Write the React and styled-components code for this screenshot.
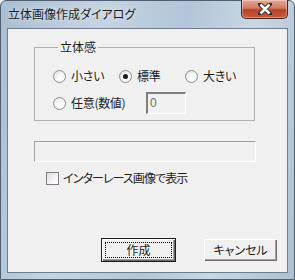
import React from 'react'
import styled, { createGlobalStyle } from 'styled-components'

const Global = createGlobalStyle`
  html, body {
    margin: 0;
    padding: 0;
    background: #ffffff;
  }
  * {
    box-sizing: border-box;
  }
`

const Window = styled.div`
  width: 295px;
  height: 280px;
  display: flex;
  flex-direction: column;
  border: 1px solid #4f5f70;
  border-radius: 6px 6px 0 0;
  background: linear-gradient(100deg, #a9bdd1 0%, #c4d3e2 30%, #b3c5d8 55%, #c9d6e3 75%, #aebfd1 100%);
  font-family: "Noto Sans CJK JP", sans-serif;
  font-size: 12px;
  font-feature-settings: "palt";
  color: #1c1c1c;
`

const TitleBar = styled.div`
  height: 27px;
  display: flex;
  justify-content: space-between;
  align-items: flex-start;
  padding-left: 7px;
`

const Title = styled.div`
  margin-top: 5px;
  line-height: 16px;
  font-size: 12px;
  text-shadow: 0 0 6px rgba(255, 255, 255, 0.9);
`

const CloseButton = styled.div`
  width: 47px;
  height: 19px;
  margin-top: -1px;
  margin-right: 6px;
  display: flex;
  align-items: center;
  justify-content: center;
  border: 1px solid #4d2320;
  border-top: none;
  border-radius: 0 0 5px 5px;
  background: linear-gradient(#e3a896 0%, #d27a62 45%, #b8432a 55%, #c65a3a 100%);
  box-shadow: inset 0 0 0 1px rgba(255, 255, 255, 0.35);
`

const Client = styled.div`
  flex: 1;
  margin: 0 6px 6px 6px;
  border: 1px solid #6f7d8c;
  background: #f0f0f0;
  display: flex;
  flex-direction: column;
  padding: 11px 9px 10px 26px;
`

const Group = styled.fieldset`
  margin: 0;
  padding: 14px 0 6px 18px;
  width: 221px;
  border: 1px solid #b0b0b0;
  border-radius: 0;
`

const Legend = styled.legend`
  margin-left: 5px;
  padding: 0 2px;
  line-height: 14px;
`

const RadioRow = styled.div`
  display: grid;
  grid-template-columns: 66px 66px 66px;
  height: 16px;
  align-items: center;
`

const ValueRow = styled.div`
  display: flex;
  align-items: center;
  height: 22px;
  margin-top: 8px;
`

const Option = styled.label`
  display: flex;
  align-items: center;
  gap: 5px;
  width: ${p => p.$width || 'auto'};
  line-height: 14px;
  letter-spacing: -0.3px;
`

const Radio = styled.span`
  width: 13px;
  height: 13px;
  border-radius: 50%;
  border: 1px solid #8d8d8d;
  background: radial-gradient(circle at 60% 65%, #ffffff 0%, #f4f4f4 45%, #d8d8d8 100%);
  display: flex;
  align-items: center;
  justify-content: center;
  flex: none;

  &::after {
    content: '';
    width: 5px;
    height: 5px;
    border-radius: 50%;
    background: ${p => (p.$checked ? '#1a1a1a' : 'transparent')};
  }
`

const NumberBox = styled.div`
  width: 40px;
  height: 22px;
  border-top: 2px solid #7f7f7f;
  border-left: 2px solid #7f7f7f;
  border-right: 1px solid #ffffff;
  border-bottom: 1px solid #ffffff;
  background: #f0f0f0;
  color: #6d6d6d;
  padding: 2px 0 0 2px;
  line-height: 14px;
  font-family: "Liberation Sans", sans-serif;
`

const Progress = styled.div`
  width: 222px;
  height: 21px;
  margin-top: 20px;
  border-top: 1px solid #a0a0a0;
  border-left: 1px solid #a0a0a0;
  border-right: 1px solid #ffffff;
  border-bottom: 1px solid #ffffff;
`

const CheckRow = styled.label`
  display: flex;
  align-items: center;
  gap: 4px;
  margin: 9px 0 0 12px;
  height: 14px;
  line-height: 14px;
  letter-spacing: -0.9px;
`

const Checkbox = styled.span`
  width: 13px;
  height: 13px;
  border: 1px solid #857885;
  background: linear-gradient(135deg, #dcdcdc 0%, #f6f6f6 60%, #ffffff 100%);
  flex: none;
`

const Buttons = styled.div`
  margin-top: auto;
  display: flex;
  justify-content: flex-end;
  gap: 27px;
`

const Button = styled.div`
  width: 75px;
  height: 24px;
  display: flex;
  align-items: center;
  justify-content: center;
  background: #f0f0f0;
  border: 1px solid ${p => (p.$default ? '#1e1e1e' : '#f0f0f0')};
  box-shadow: ${p =>
    p.$default
      ? 'inset 1px 1px 0 #ffffff, inset -1px -1px 0 #696969, inset -2px -2px 0 #a0a0a0'
      : 'inset 1px 1px 0 #ffffff, inset -1px -1px 0 #7a6a6a, inset -2px -2px 0 #a0a0a0'};
  line-height: 14px;
`

const FocusRect = styled.span`
  flex: 1;
  align-self: stretch;
  margin: 3px;
  border: 1px dotted #000;
  display: flex;
  align-items: center;
  justify-content: center;
`

function CloseIcon() {
  return (
    <svg width="14" height="12" viewBox="0 0 14 12">
      <path d="M2 1 L12 11 M12 1 L2 11" stroke="#3a2a2a" strokeWidth="4.5" strokeLinecap="square" />
      <path d="M2.5 1.5 L11.5 10.5 M11.5 1.5 L2.5 10.5" stroke="#ffffff" strokeWidth="2.5" />
    </svg>
  )
}

export default function App() {
  return (
    <>
      <Global />
      <Window>
        <TitleBar>
          <Title>立体画像作成ダイアログ</Title>
          <CloseButton>
            <CloseIcon />
          </CloseButton>
        </TitleBar>
        <Client>
          <Group>
            <Legend>立体感</Legend>
            <RadioRow>
              <Option><Radio />小さい</Option>
              <Option><Radio $checked />標準</Option>
              <Option><Radio />大きい</Option>
            </RadioRow>
            <ValueRow>
              <Option $width="93px"><Radio />任意(数値)</Option>
              <NumberBox>0</NumberBox>
            </ValueRow>
          </Group>
          <Progress />
          <CheckRow>
            <Checkbox />
            インターレース画像で表示
          </CheckRow>
          <Buttons>
            <Button $default>
              <FocusRect>作成</FocusRect>
            </Button>
            <Button>キャンセル</Button>
          </Buttons>
        </Client>
      </Window>
    </>
  )
}
